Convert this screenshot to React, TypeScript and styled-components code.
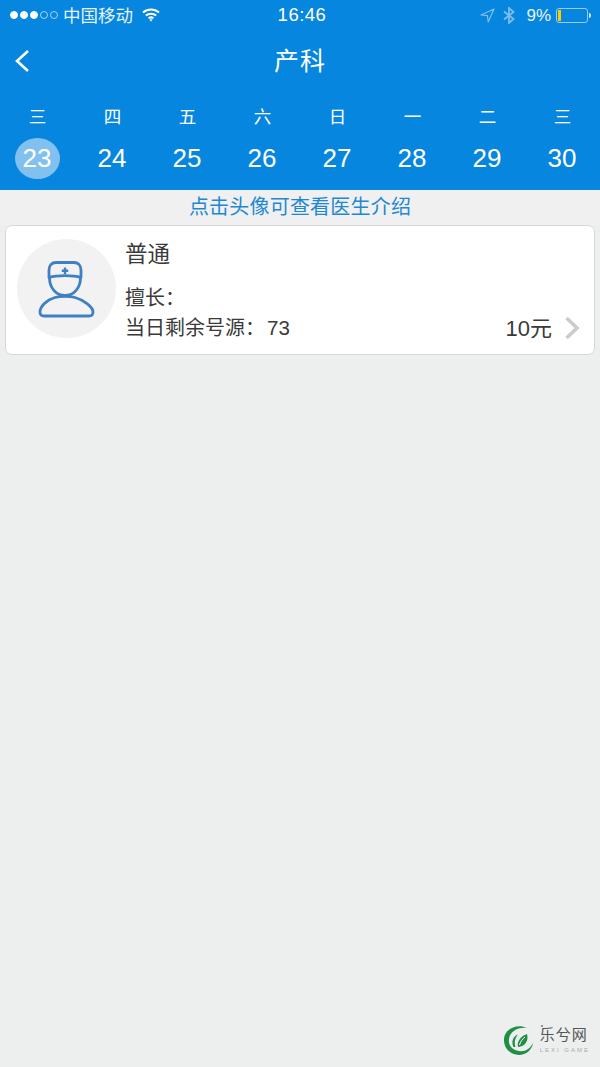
import React from 'react';
import styled, { createGlobalStyle } from 'styled-components';

const FONT = '"Liberation Sans", "Noto Sans CJK SC", sans-serif';

const days = [
  { week: '三', date: 23, active: true },
  { week: '四', date: 24 },
  { week: '五', date: 25 },
  { week: '六', date: 26 },
  { week: '日', date: 27 },
  { week: '一', date: 28 },
  { week: '二', date: 29 },
  { week: '三', date: 30 },
];

function App(): JSX.Element {
  return (
    <Page>
      <GlobalStyle />
      <Header>
        <StatusBar>
          <StatusLeft>
            <Signal>
              <Dot $on />
              <Dot $on />
              <Dot $on />
              <Dot />
              <Dot />
            </Signal>
            <Carrier>中国移动</Carrier>
            <svg width="18" height="14" viewBox="0 0 18 14" fill="none" stroke="#fff" strokeWidth="2">
              <path d="M1 4.6C5.6 .6 12.4 .6 17 4.6" />
              <path d="M3.8 7.6C6.8 5 11.2 5 14.2 7.6" />
              <path d="M6.6 10.3C8 9.2 10 9.2 11.4 10.3" />
              <path d="M9 13.4L7.4 11.8C8.3 11 9.7 11 10.6 11.8Z" fill="#fff" stroke="none" />
            </svg>
          </StatusLeft>
          <Clock>16:46</Clock>
          <StatusRight>
            <svg width="15" height="15" viewBox="0 0 15 15" fill="none" stroke="#7fbdec" strokeWidth="1.2">
              <path d="M1 7L14 1L8.2 14L7.4 7.6Z" strokeLinejoin="round" />
            </svg>
            <BluetoothIcon width="12" height="17" viewBox="0 0 12 17" fill="none" stroke="#7fbdec" strokeWidth="1.8">
              <path d="M1 4.5L10.5 12L6 16V1L10.5 5L1 12.5" />
            </BluetoothIcon>
            <Percent>9%</Percent>
            <Battery>
              <BatteryLevel />
            </Battery>
            <BatteryTip />
          </StatusRight>
        </StatusBar>
        <NavBar>
          <BackButton>
            <svg width="16" height="22" viewBox="0 0 16 22" fill="none" stroke="#fff" strokeWidth="2.6">
              <path d="M14 1L3 11L14 21" />
            </svg>
          </BackButton>
          <Title>产科</Title>
        </NavBar>
        <WeekRow>
          {days.map((day) => (
            <DayCell key={day.date}>
              <WeekLabel>{day.week}</WeekLabel>
              <DateLabel $active={day.active}>{day.date}</DateLabel>
            </DayCell>
          ))}
        </WeekRow>
      </Header>
      <Hint>点击头像可查看医生介绍</Hint>
      <DoctorCard>
        <Avatar>
          <svg width="58" height="58" viewBox="0 0 58 58" fill="none" stroke="#3f80c4" strokeWidth="2.8">
            <path d="M11 17.5V10C11 5 14 2.5 18 2.5H36C40 2.5 43 5 43 10V17.5C35 15 19 15 11 17.5Z" strokeLinejoin="round" />
            <path d="M11.5 17.5C11.5 28 18 35.5 27 35.5C36 35.5 42.5 28 42.5 17.5" />
            <path d="M27 7.5V14M23.8 10.8H30.2" strokeWidth="2.4" />
            <path d="M17 37.5C8 40 2 47 2 52C2 55 3.5 56 6 56H51C53.5 56 55 55 55 52C55 47 46 40 37 37.5C32 36 22 36 17 37.5Z" strokeLinejoin="round" />
          </svg>
        </Avatar>
        <CardBody>
          <DoctorName>普通</DoctorName>
          <Speciality>擅长：</Speciality>
          <CardFooter>
            <Remaining>
              当日剩余号源：<Count>73</Count>
            </Remaining>
            <Price>10元</Price>
            <svg width="16" height="24" viewBox="0 0 16 24" fill="none" stroke="#cbcbcb" strokeWidth="3.6">
              <path d="M2.5 2L13 12L2.5 22" />
            </svg>
          </CardFooter>
        </CardBody>
      </DoctorCard>
      <Watermark>
        <svg width="32" height="32" viewBox="0 0 32 32">
          <path d="M24 4C14 -1 1 5 1 16C1 25 8 31 16 31C23 31 29 26 30 19C27 25 22 28 16 27C9 26 5 21 6 15C7 8 14 3 24 4Z" fill="#1f8f45" />
          <path d="M10.5 23C8 18 10 12 15 10.5C12 14 11 18 12.5 23Z" fill="#1f8f45" />
          <path d="M15 23C13.5 17.5 18 12 24 10C26 16.5 22 22.5 15 23Z" fill="#1f8f45" />
          <path d="M16.5 21C17.5 17.5 19.5 15 22 13" fill="none" stroke="#fff" strokeWidth="1" />
        </svg>
        <WatermarkText>
          <WatermarkName>乐兮网</WatermarkName>
          <WatermarkSub>LEXI GAME</WatermarkSub>
        </WatermarkText>
      </Watermark>
    </Page>
  );
}

const GlobalStyle = createGlobalStyle`
  html,
  body {
    margin: 0;
    padding: 0;
    background: #edeeee;
  }
`;

const Page = styled.div`
  position: relative;
  display: flex;
  flex-direction: column;
  width: 600px;
  height: 1067px;
  overflow: hidden;
  background: #edeeee;
  font-family: ${FONT};
`;

const Header = styled.div`
  display: flex;
  flex-direction: column;
  height: 190px;
  background: #0686de;
  color: #fff;
`;

const StatusBar = styled.div`
  display: grid;
  grid-template-columns: 1fr auto 1fr;
  align-items: center;
  height: 30px;
  padding: 0 9px 0 10px;
  box-sizing: border-box;
`;

const StatusLeft = styled.div`
  display: flex;
  align-items: center;
`;

const Signal = styled.div`
  display: flex;
  gap: 2px;
`;

const Dot = styled.span<{ $on?: boolean }>`
  width: 8px;
  height: 8px;
  box-sizing: border-box;
  border-radius: 50%;
  border: 1px solid ${(p) => (p.$on ? '#fff' : '#a5d2f2')};
  background: ${(p) => (p.$on ? '#fff' : 'transparent')};
`;

const Carrier = styled.span`
  margin: -2px 9px 0 5px;
  font-size: 17.5px;
  color: #e6f3fc;
`;

const Clock = styled.span`
  margin-left: 3px;
  font-size: 18.5px;
  font-weight: 500;
  letter-spacing: 0.5px;
`;

const StatusRight = styled.div`
  display: flex;
  align-items: center;
  justify-content: flex-end;
`;

const BluetoothIcon = styled.svg`
  margin: 0 0 0 8px;
`;

const Percent = styled.span`
  margin: 1px 5px 0 11px;
  font-size: 17px;
  color: #e6f3fc;
`;

const Battery = styled.div`
  width: 32px;
  height: 15px;
  box-sizing: border-box;
  padding: 1px;
  border: 1px solid #9ccdf0;
  border-radius: 3px;
`;

const BatteryLevel = styled.div`
  width: 3px;
  height: 100%;
  background: #ffcc00;
`;

const BatteryTip = styled.div`
  width: 2px;
  height: 5px;
  margin-left: 1px;
  border-radius: 0 2px 2px 0;
  background: #cfe6f8;
`;

const NavBar = styled.div`
  position: relative;
  display: flex;
  align-items: center;
  justify-content: center;
  height: 60px;
`;

const BackButton = styled.div`
  position: absolute;
  left: 14px;
  top: 20px;
  line-height: 0;
`;

const Title = styled.h1`
  margin: -2px 0 0;
  font-size: 25px;
  font-weight: 400;
  letter-spacing: 1px;
`;

const WeekRow = styled.div`
  display: grid;
  grid-template-columns: repeat(8, 75px);
`;

const DayCell = styled.div`
  display: flex;
  flex-direction: column;
  align-items: center;
`;

const WeekLabel = styled.div`
  margin-top: 14px;
  font-size: 17.5px;
  line-height: 26px;
`;

const DateLabel = styled.div<{ $active?: boolean }>`
  display: flex;
  align-items: center;
  justify-content: center;
  width: 45px;
  height: 41px;
  margin: 8px 1px 0 0;
  border-radius: 50%;
  background: ${(p) => (p.$active ? '#82c1ef' : 'transparent')};
  font-size: 26px;
`;

const Hint = styled.div`
  height: 35px;
  font-size: 20px;
  letter-spacing: 0.2px;
  line-height: 35px;
  text-align: center;
  color: #1e88d2;
  background: #f0f0f0;
`;

const DoctorCard = styled.div`
  display: flex;
  height: 130px;
  margin: 0 5px;
  padding: 13px 14px 0 11px;
  box-sizing: border-box;
  border: 1px solid #d8d8d8;
  border-radius: 7px;
  background: #fff;
`;

const Avatar = styled.div`
  display: flex;
  align-items: center;
  justify-content: center;
  flex: none;
  width: 99px;
  height: 99px;
  border-radius: 50%;
  background: #f2f2f2;
`;

const CardBody = styled.div`
  display: flex;
  flex-direction: column;
  flex: 1;
  margin-left: 9px;
  color: #3a3a3a;
`;

const DoctorName = styled.div`
  margin-top: 1px;
  font-size: 22.5px;
  line-height: 30px;
`;

const Speciality = styled.div`
  margin-top: 14px;
  font-size: 20px;
  line-height: 28px;
`;

const CardFooter = styled.div`
  display: flex;
  align-items: center;
  margin-top: 2px;
`;

const Remaining = styled.div`
  flex: 1;
  font-size: 20px;
  line-height: 28px;
`;

const Count = styled.span`
  margin-left: 2px;
  font-size: 20.5px;
`;

const Price = styled.div`
  margin: -4px 12px 0 0;
  font-size: 22px;
`;

const Watermark = styled.div`
  position: absolute;
  right: 10px;
  bottom: 11px;
  display: flex;
  align-items: center;
  gap: 5px;
`;

const WatermarkText = styled.div`
  display: flex;
  flex-direction: column;
  color: #555;
`;

const WatermarkName = styled.div`
  position: relative;
  font-size: 15px;
  line-height: 18px;
  letter-spacing: 1px;

  &::before {
    content: '';
    position: absolute;
    left: 1px;
    top: -1px;
    width: 2px;
    height: 2px;
    border-radius: 50%;
    background: #777;
  }
`;

const WatermarkSub = styled.div`
  margin-top: 2px;
  font-size: 6px;
  line-height: 9px;
  letter-spacing: 2px;
  color: #aaa;
`;

export default App;
